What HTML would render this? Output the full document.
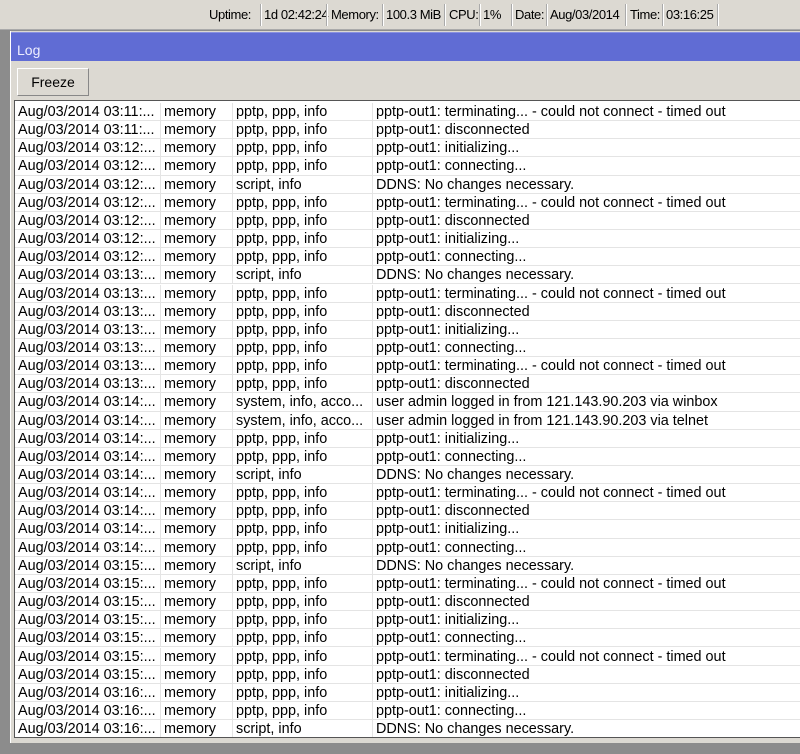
<!DOCTYPE html>
<html><head><meta charset="utf-8"><style>
*{margin:0;padding:0;box-sizing:border-box}
body{width:800px;height:754px;overflow:hidden;background:#8c8c8c;font-family:"Liberation Sans",sans-serif;font-size:14.4px;color:#000;position:relative}
#top{position:absolute;left:0;top:0;width:800px;height:30px;background:#dcd9d2;border-bottom:1px solid #aaa}
#top span{position:absolute;top:7px;white-space:nowrap;font-size:13px;letter-spacing:-0.4px}
.sep{position:absolute;top:4px;width:2px;height:22px;background:#fff;border-left:1px solid #aaa}
#win{position:absolute;left:10px;top:31px;width:790px;height:712px;background:#dcd9d2;border-left:1px solid #fff}
#title{position:absolute;left:0;top:1px;width:790px;height:29px;background:#606cd4;color:#eef;font-size:14px;padding:9px 0 0 6px;border-top:1px solid #8890e0}
#btn{position:absolute;left:6px;top:37px;width:72px;height:28px;border:1px solid #fff;border-right-color:#888;border-bottom-color:#888;background:#dcd9d2;text-align:center;line-height:26px;font-size:14px}
#tbl{position:absolute;left:3px;top:69px;width:787px;height:638px;background:#fff;border:1px solid #555;border-right:none;overflow:hidden}
.r{position:absolute;left:0;height:18.15px;width:787px;border-bottom:1px solid #e4e4e4;white-space:nowrap;line-height:19px}
.r div{position:absolute;top:0;height:18px;padding-left:3px;border-right:1px solid #e4e4e4;overflow:hidden}
.c1{left:0;width:146px}.c2{left:146px;width:72px}.c3{left:218px;width:140px}.c4{left:358px;width:430px;border-right:none!important}
</style></head><body>
<div id="top">
<span style="left:209px">Uptime:</span><div class="sep" style="left:260px"></div><span style="left:264px">1d 02:42:24</span>
<div class="sep" style="left:326px"></div><span style="left:331px">Memory:</span><div class="sep" style="left:382px"></div><span style="left:386px">100.3 MiB</span>
<div class="sep" style="left:444px"></div><span style="left:449px">CPU:</span><div class="sep" style="left:479px"></div><span style="left:483px">1%</span>
<div class="sep" style="left:511px"></div><span style="left:515px">Date:</span><div class="sep" style="left:546px"></div><span style="left:550px">Aug/03/2014</span>
<div class="sep" style="left:625px"></div><span style="left:630px">Time:</span><div class="sep" style="left:662px"></div><span style="left:666px">03:16:25</span>
<div class="sep" style="left:717px"></div>
</div>
<div id="win">
<div id="title">Log</div>
<div id="btn">Freeze</div>
<div id="tbl">
<script>
var d=[["11","pptp, ppp, info","pptp-out1: terminating... - could not connect - timed out"],["11","pptp, ppp, info","pptp-out1: disconnected"],["12","pptp, ppp, info","pptp-out1: initializing..."],["12","pptp, ppp, info","pptp-out1: connecting..."],["12","script, info","DDNS: No changes necessary."],["12","pptp, ppp, info","pptp-out1: terminating... - could not connect - timed out"],["12","pptp, ppp, info","pptp-out1: disconnected"],["12","pptp, ppp, info","pptp-out1: initializing..."],["12","pptp, ppp, info","pptp-out1: connecting..."],["13","script, info","DDNS: No changes necessary."],["13","pptp, ppp, info","pptp-out1: terminating... - could not connect - timed out"],["13","pptp, ppp, info","pptp-out1: disconnected"],["13","pptp, ppp, info","pptp-out1: initializing..."],["13","pptp, ppp, info","pptp-out1: connecting..."],["13","pptp, ppp, info","pptp-out1: terminating... - could not connect - timed out"],["13","pptp, ppp, info","pptp-out1: disconnected"],["14","system, info, acco...","user admin logged in from 121.143.90.203 via winbox"],["14","system, info, acco...","user admin logged in from 121.143.90.203 via telnet"],["14","pptp, ppp, info","pptp-out1: initializing..."],["14","pptp, ppp, info","pptp-out1: connecting..."],["14","script, info","DDNS: No changes necessary."],["14","pptp, ppp, info","pptp-out1: terminating... - could not connect - timed out"],["14","pptp, ppp, info","pptp-out1: disconnected"],["14","pptp, ppp, info","pptp-out1: initializing..."],["14","pptp, ppp, info","pptp-out1: connecting..."],["15","script, info","DDNS: No changes necessary."],["15","pptp, ppp, info","pptp-out1: terminating... - could not connect - timed out"],["15","pptp, ppp, info","pptp-out1: disconnected"],["15","pptp, ppp, info","pptp-out1: initializing..."],["15","pptp, ppp, info","pptp-out1: connecting..."],["15","pptp, ppp, info","pptp-out1: terminating... - could not connect - timed out"],["15","pptp, ppp, info","pptp-out1: disconnected"],["16","pptp, ppp, info","pptp-out1: initializing..."],["16","pptp, ppp, info","pptp-out1: connecting..."],["16","script, info","DDNS: No changes necessary."]];
var h="";for(var i=0;i<d.length;i++){h+='<div class="r" style="top:'+(2+i*18.15).toFixed(2)+'px"><div class="c1">Aug/03/2014 03:'+d[i][0]+':...</div><div class="c2">memory</div><div class="c3">'+d[i][1]+'</div><div class="c4">'+d[i][2]+'</div></div>';}
document.write(h);
</script>
</div>
</div>
</body></html>
